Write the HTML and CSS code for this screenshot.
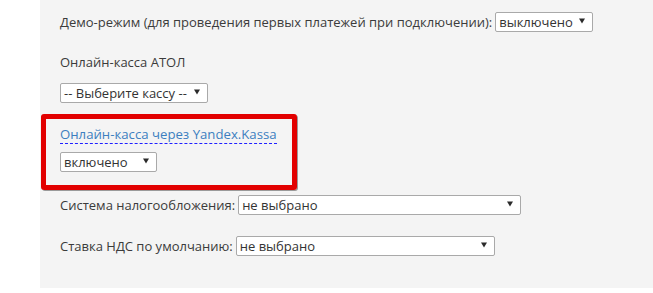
FILE: index.html
```html
<!DOCTYPE html>
<html lang="ru">
<head>
<meta charset="utf-8">
<link rel="stylesheet" href="styles.css">
</head>
<body>
<div class="panel">
  <div class="row row-demo">
    <span class="label">Демо-режим (для проведения первых платежей при подключении):</span>
    <span class="select sel-demo"><span class="val">выключено</span><svg class="arrow" width="6" height="6" viewBox="0 0 6 6"><path d="M0 0.5H6L3 5.5Z"/></svg></span>
  </div>
  <div class="label label-atol">Онлайн-касса АТОЛ</div>
  <div class="row row-atol">
    <span class="select sel-atol"><span class="val">-- Выберите кассу --</span><svg class="arrow" width="6" height="6" viewBox="0 0 6 6"><path d="M0 0.5H6L3 5.5Z"/></svg></span>
  </div>
  <div class="highlight">
    <div class="link-row"><a class="link">Онлайн-касса через Yandex.Kassa</a></div>
    <span class="select sel-yk"><span class="val">включено</span><svg class="arrow" width="6" height="6" viewBox="0 0 6 6"><path d="M0 0.5H6L3 5.5Z"/></svg></span>
  </div>
  <div class="row row-tax">
    <span class="label">Система налогообложения:</span>
    <span class="select sel-tax"><span class="val">не выбрано</span><svg class="arrow" width="6" height="6" viewBox="0 0 6 6"><path d="M0 0.5H6L3 5.5Z"/></svg></span>
  </div>
  <div class="row row-vat">
    <span class="label">Ставка НДС по умолчанию:</span>
    <span class="select sel-vat"><span class="val">не выбрано</span><svg class="arrow" width="6" height="6" viewBox="0 0 6 6"><path d="M0 0.5H6L3 5.5Z"/></svg></span>
  </div>
</div>
</body>
</html>
```
FILE: styles.css
```css
html, body {
  margin: 0;
  padding: 0;
  background: #ffffff;
}
body {
  font-family: "Open Sans", "Liberation Sans", sans-serif;
  color: #3b3b3b;
  font-size: 13px;
}
.panel {
  margin-left: 40px;
  width: 613px;
  height: 288px;
  background: #f4f4f4;
  box-sizing: border-box;
  padding: 12px 0 0 20px;
  display: flex;
  flex-direction: column;
  align-items: flex-start;
}
.row {
  display: flex;
  align-items: center;
  gap: 3px;
}
.label {
  line-height: 20px;
  white-space: nowrap;
}
.select {
  display: inline-flex;
  align-items: center;
  justify-content: space-between;
  box-sizing: border-box;
  height: 20px;
  background: #ffffff;
  border: 1px solid #a9a9a9;
  border-radius: 2px;
  padding: 0 7px 0 3px;
  font-size: 13px;
  color: #333;
  white-space: nowrap;
}
.arrow {
  fill: #2a2a2a;
  flex: none;
  margin-top: -3px;
}
.sel-demo { width: 98px; }
.label-atol { margin-top: 20px; }
.row-atol { margin-top: 11px; }
.sel-atol { width: 148px; }
.highlight {
  margin: 11px 0 0 -19px;
  width: 256px;
  height: 76px;
  box-sizing: border-box;
  border: 5px solid #e20000;
  border-radius: 3px;
  box-shadow: 1px 1px 0 #9a9a9a;
  padding: 6px 0 0 14px;
}
.link-row { line-height: 18px; }
.link {
  color: #3d7fc0;
  border-bottom: 1px dashed #2020ff;
  font-size: 13.2px;
}
.sel-yk { width: 97px; margin-top: 9px; }
.row-tax { margin-top: 5px; }
.sel-tax { width: 283px; }
.row-vat { margin-top: 21px; }
.sel-vat { width: 259px; }
```
